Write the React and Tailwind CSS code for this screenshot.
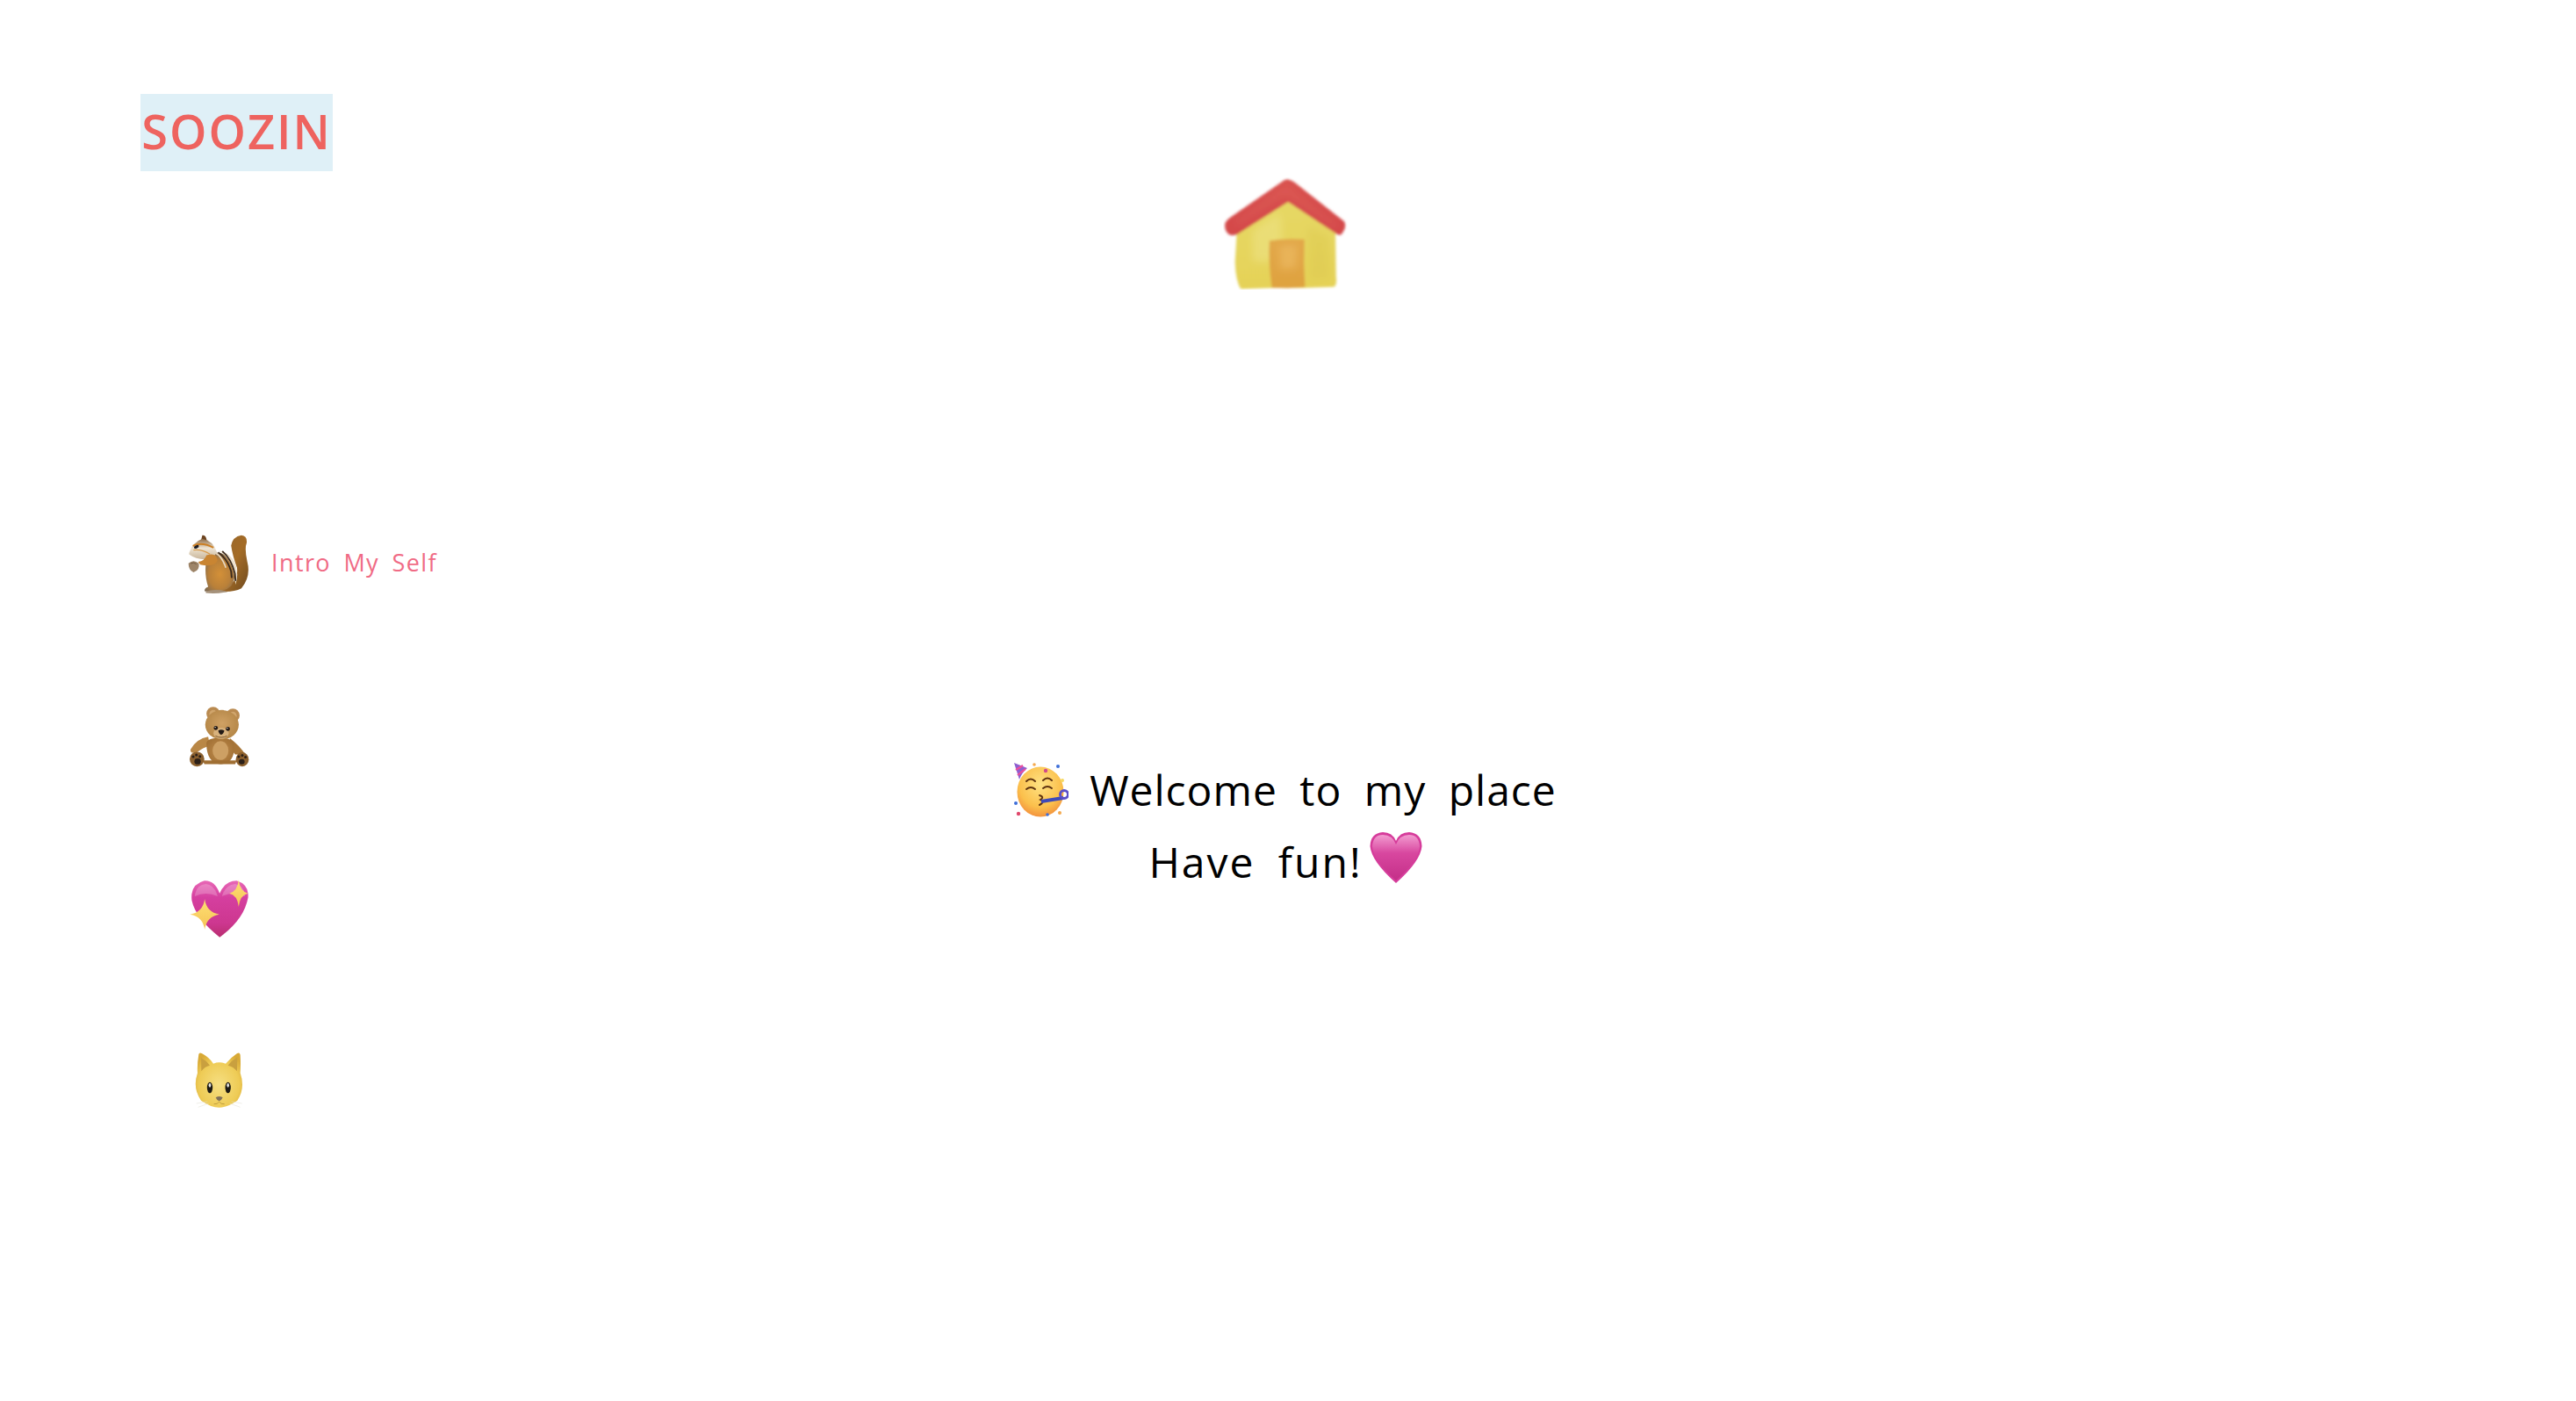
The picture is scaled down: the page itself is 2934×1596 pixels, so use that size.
const FONT = "font-['Open_Sans','Liberation_Sans',sans-serif]";

function House() {
  return (
    <svg viewBox="70 35 425 385" className="w-[142px] h-[128px] block">
      <defs>
        <filter id="hb" x="-5%" y="-5%" width="110%" height="110%"><feGaussianBlur stdDeviation="4" /></filter>
        <filter id="hb2" x="-30%" y="-30%" width="160%" height="160%"><feGaussianBlur stdDeviation="12" /></filter>
        <linearGradient id="hw" x1="0" y1="0" x2="0" y2="1"><stop offset="0" stopColor="#e6d865" /><stop offset="1" stopColor="#e5d257" /></linearGradient>
        <linearGradient id="hd" x1="0" y1="0" x2="0" y2="1"><stop offset="0" stopColor="#e2a84a" /><stop offset="1" stopColor="#dfa23f" /></linearGradient>
        <linearGradient id="hr" x1="0" y1="0" x2="0" y2="1"><stop offset="0" stopColor="#d9524f" /><stop offset="1" stopColor="#d34749" /></linearGradient>
      </defs>
      <g filter="url(#hb)">
        <path d="M116 222 L288 112 L454 225 L456 375 Q460 402 450 410 L340 414 L240 414 L130 418 Q112 390 110 325 Z" fill="url(#hw)" />
        <path d="M170 220 Q230 175 265 160 L275 300 Q215 340 170 320 Z" fill="#efe58c" opacity=".5" filter="url(#hb2)" />
        <path d="M360 200 L430 240 L435 380 L365 390 Z" fill="#d9c44c" opacity=".35" filter="url(#hb2)" />
        <path d="M228 252 Q290 243 348 248 Q344 330 350 411 L290 415 L236 413 Q224 330 228 252 Z" fill="url(#hd)" />
        <path d="M262 270 L322 268 L320 345 L266 350 Z" fill="#eebd68" opacity=".6" filter="url(#hb2)" />
        <path d="M288 42 Q303 44 320 57 L484 186 Q495 205 474 231 Q461 235 450 224 L292 119 L130 222 Q106 240 88 230 Q71 214 77 190 Q85 177 100 168 L270 51 Q278 43 288 42 Z" fill="url(#hr)" />
        <path d="M115 195 L285 78 L458 205" fill="none" stroke="#e56f66" strokeWidth="12" opacity=".45" filter="url(#hb2)" />
      </g>
    </svg>
  );
}

function Chipmunk() {
  return (
    <svg viewBox="40 55 215 205" className="w-[72px] h-[69px] block">
      <defs>
        <linearGradient id="ct" x1="0" y1="0" x2="1" y2="1"><stop offset="0" stopColor="#94652a" /><stop offset=".5" stopColor="#a46c28" /><stop offset="1" stopColor="#6f4a1e" /></linearGradient>
        <radialGradient id="cb" cx=".5" cy=".55" r=".6"><stop offset="0" stopColor="#d39038" /><stop offset=".6" stopColor="#b98039" /><stop offset="1" stopColor="#7f6a50" /></radialGradient>
        <linearGradient id="ch" x1="0" y1="0" x2="0" y2="1"><stop offset="0" stopColor="#8d6b45" /><stop offset=".45" stopColor="#eee4d2" /><stop offset="1" stopColor="#c9b69b" /></linearGradient>
        <filter id="cs"><feGaussianBlur stdDeviation="1" /></filter>
      </defs>
      <path d="M190 95 Q195 65 225 60 Q245 62 243 85 Q235 105 245 150 Q258 200 225 240 Q195 255 150 250 L185 225 Q215 215 210 170 Q195 130 190 95 Z" fill="url(#ct)" filter="url(#cs)" />
      <path d="M108 125 Q165 105 192 150 Q215 195 190 232 Q170 252 125 253 L100 250 Q98 240 112 235 Q96 190 108 125 Z" fill="url(#cb)" />
      <path d="M148 112 Q188 135 200 190 L205 228 Q218 190 202 150 Q182 118 148 112Z" fill="#efe3d0" />
      <path d="M146 118 Q176 138 190 182 L192 205" fill="none" stroke="#3a2a1d" strokeWidth="5.5" />
      <path d="M160 114 Q190 138 203 190 L205 215" fill="none" stroke="#3a2a1d" strokeWidth="5.5" />
      <path d="M134 118 Q160 132 172 170" fill="none" stroke="#e7d9c2" strokeWidth="5" />
      <path d="M104 250 Q140 240 178 252 Q140 260 104 256 Z" fill="#a5917a" />
      <path d="M92 60 Q106 57 108 84 L87 80 Z" fill="#6d4420" />
      <path d="M47 120 Q58 85 92 72 Q128 78 142 118 Q128 140 100 142 Q70 142 47 125 Z" fill="url(#ch)" />
      <path d="M60 96 Q90 80 130 102" fill="none" stroke="#cc7f24" strokeWidth="6" />
      <path d="M62 110 Q90 106 118 124" fill="none" stroke="#d89a4a" strokeWidth="4" />
      <ellipse cx="72" cy="99" rx="9" ry="5" fill="#1b1b22" transform="rotate(-25 72 99)" />
      <path d="M106 128 Q140 116 144 145 Q135 170 85 160 L78 150 Q100 148 106 128 Z" fill="#c98532" />
      <path d="M45 155 Q62 140 80 155 Q85 178 62 186 Q45 178 45 155 Z" fill="#9d8468" />
      <path d="M52 156 Q62 150 72 158" fill="none" stroke="#6d563e" strokeWidth="2.5" />
    </svg>
  );
}

function Bear() {
  return (
    <svg viewBox="42 40 206 208" className="w-[69px] h-[70px] block">
      <defs>
        <radialGradient id="bf" cx=".5" cy=".45" r=".65"><stop offset="0" stopColor="#cfa164" /><stop offset="1" stopColor="#b08242" /></radialGradient>
        <radialGradient id="bb" cx=".5" cy=".5" r=".6"><stop offset="0" stopColor="#c08d4f" /><stop offset="1" stopColor="#a06f33" /></radialGradient>
      </defs>
      <path d="M108 145 Q68 152 48 188 Q46 204 70 198 Q92 180 114 176 Z" fill="#b98746" />
      <path d="M182 150 Q215 175 234 205 L200 205 L178 180 Z" fill="#a87638" />
      <circle cx="125" cy="66" r="23" fill="#b98a50" /><circle cx="125" cy="67" r="13" fill="#d0a56c" />
      <circle cx="192" cy="72" r="23" fill="#b98a50" /><circle cx="192" cy="73" r="13" fill="#d0a56c" />
      <path d="M102 170 Q100 150 150 148 Q198 150 196 180 Q198 235 150 238 Q104 236 102 170 Z" fill="url(#bb)" />
      <ellipse cx="150" cy="192" rx="27" ry="32" fill="#cda064" />
      <ellipse cx="155" cy="104" rx="57" ry="50" fill="url(#bf)" />
      <ellipse cx="152" cy="133" rx="26" ry="19" fill="#d8b27d" />
      <circle cx="134" cy="115" r="7" fill="#241a14" /><circle cx="175" cy="118" r="7" fill="#241a14" />
      <circle cx="132" cy="113" r="2" fill="#fff" /><circle cx="173" cy="116" r="2" fill="#fff" />
      <path d="M142 124 Q152 118 163 124 Q160 136 152 138 Q145 136 142 124 Z" fill="#221a16" />
      <path d="M133 142 Q152 152 172 142" fill="none" stroke="#6e4a22" strokeWidth="2.5" />
      <path d="M90 225 L205 225 L200 238 L95 238 Z" fill="#a06f33" />
      <ellipse cx="70" cy="221" rx="25" ry="25" fill="#8a5f2e" />
      <ellipse cx="224" cy="222" rx="22" ry="24" fill="#8a5f2e" />
      <ellipse cx="72" cy="229" rx="11" ry="10" fill="#2c2018" /><ellipse cx="222" cy="230" rx="10" ry="9" fill="#2c2018" />
      <circle cx="57" cy="213" r="4.5" fill="#2c2018" /><circle cx="68" cy="207" r="4.5" fill="#2c2018" /><circle cx="80" cy="212" r="4.5" fill="#2c2018" />
      <circle cx="212" cy="213" r="4.5" fill="#2c2018" /><circle cx="224" cy="208" r="4.5" fill="#2c2018" /><circle cx="235" cy="214" r="4.5" fill="#2c2018" />
    </svg>
  );
}

function Sparkle({ cx, cy, rx, ry, id }) {
  const k = 0.13;
  return (
    <path
      d={`M${cx} ${cy - ry} Q${cx + rx * k} ${cy - ry * k} ${cx + rx} ${cy} Q${cx + rx * k} ${cy + ry * k} ${cx} ${cy + ry} Q${cx - rx * k} ${cy + ry * k} ${cx - rx} ${cy} Q${cx - rx * k} ${cy - ry * k} ${cx} ${cy - ry} Z`}
      fill={`url(#${id})`}
    />
  );
}

function SparkleHeart() {
  return (
    <svg viewBox="42 630 206 204" className="w-[69px] h-[68px] block">
      <defs>
        <linearGradient id="sh" x1="0" y1="0" x2="0" y2="1"><stop offset="0" stopColor="#e868b6" /><stop offset=".3" stopColor="#d53f9f" /><stop offset=".75" stopColor="#cd3790" /><stop offset="1" stopColor="#b92e70" /></linearGradient>
        <linearGradient id="ss" x1="0" y1="0" x2="0" y2="1"><stop offset="0" stopColor="#fde073" /><stop offset="1" stopColor="#f6c356" /></linearGradient>
      </defs>
      <path d="M147 830 Q65 765 52 705 Q45 650 95 637 Q130 635 147 680 Q165 638 205 637 Q248 650 244 695 Q230 770 147 830 Z" fill="url(#sh)" />
      <path d="M62 690 Q66 650 100 648 Q130 652 140 690 Q100 672 62 690 Z M155 690 Q165 652 200 648 Q232 655 234 690 Q195 672 155 690 Z" fill="#fff" opacity=".22" />
      <Sparkle cx={96} cy={752} rx={50} ry={52} id="ss" />
      <Sparkle cx={212} cy={680} rx={32} ry={46} id="ss" />
    </svg>
  );
}

function Cat() {
  return (
    <svg viewBox="65 55 165 195" className="w-[55px] h-[65px] block">
      <defs>
        <radialGradient id="cf" cx=".5" cy=".58" r=".62"><stop offset="0" stopColor="#f6df82" /><stop offset=".7" stopColor="#eecb55" /><stop offset="1" stopColor="#d8a936" /></radialGradient>
      </defs>
      <path d="M78 64 Q80 56 90 62 Q115 76 128 96 Q148 88 170 96 Q190 74 208 62 Q218 56 220 66 Q222 100 220 128 Q238 180 210 222 Q175 246 148 246 Q120 246 86 222 Q56 180 74 128 Q72 100 78 64 Z" fill="url(#cf)" />
      <path d="M86 76 Q105 86 116 102 Q98 106 87 122 Z M210 74 Q190 86 178 102 Q196 106 209 122 Z" fill="#c9a03f" />
      <ellipse cx="116" cy="178" rx="9.5" ry="19" fill="#1d1a14" /><ellipse cx="178" cy="178" rx="9.5" ry="19" fill="#1d1a14" />
      <ellipse cx="116" cy="170" rx="4" ry="7" fill="#e6e6e6" /><ellipse cx="178" cy="170" rx="4" ry="7" fill="#e6e6e6" />
      <path d="M136 212 Q148 204 160 212 Q156 222 148 224 Q140 222 136 212 Z" fill="#80705a" />
      <path d="M130 234 Q142 236 148 226 Q154 236 166 234" fill="none" stroke="#a98532" strokeWidth="2" />
      <path d="M70 232 L108 226 M76 245 L112 232 M226 232 L190 226 M220 245 L184 232" stroke="#e3e0d4" strokeWidth="1.6" />
    </svg>
  );
}

function Party() {
  return (
    <svg viewBox="0 0 62 62" className="w-[62px] h-[62px] block">
      <defs>
        <radialGradient id="pf" cx=".5" cy=".35" r=".7"><stop offset="0" stopColor="#fee283" /><stop offset=".65" stopColor="#fbc04c" /><stop offset="1" stopColor="#f1883a" /></radialGradient>
      </defs>
      <ellipse cx="30" cy="33" rx="26.5" ry="28.5" fill="url(#pf)" />
      <path d="M0 0 L15 6 Q9 11 6 19 Z" fill="#8e5fd0" />
      <path d="M2 8 L10 3 M4 14 L13 7" stroke="#ec4f9c" strokeWidth="2.2" />
      <path d="M14 21 Q19 16 24 21 M33 20 Q38 15 43 20" fill="none" stroke="#5e3310" strokeWidth="2" strokeLinecap="round" />
      <path d="M14 30 Q19 26 24 30 M33 29 Q38 25 43 29" fill="none" stroke="#5e3310" strokeWidth="2" strokeLinecap="round" />
      <path d="M29 37 Q35 39 30 42 Q35 45 29 48" fill="none" stroke="#5e3310" strokeWidth="2" strokeLinecap="round" />
      <path d="M31 44 L56 40" stroke="#3f4ab8" strokeWidth="4" />
      <circle cx="57" cy="36" r="4.5" fill="none" stroke="#5b50c8" strokeWidth="3" />
      <circle cx="50" cy="4" r="2" fill="#3f6fd8" /><circle cx="36" cy="9" r="2.2" fill="#d14b8c" />
      <circle cx="23" cy="2" r="1.8" fill="#f4a94e" /><circle cx="2" cy="46" r="2" fill="#3f6fd8" />
      <circle cx="5" cy="58" r="2.2" fill="#e0486c" /><circle cx="52" cy="57" r="2" fill="#f4a94e" />
      <circle cx="38" cy="59" r="1.8" fill="#3f6fd8" /><circle cx="55" cy="20" r="2" fill="#f6d860" />
    </svg>
  );
}

function PinkHeart() {
  return (
    <svg viewBox="0 0 60 60" className="w-[60px] h-[60px] block">
      <defs>
        <linearGradient id="ph" x1="0" y1="0" x2="0" y2="1"><stop offset="0" stopColor="#f29bd0" /><stop offset=".4" stopColor="#d8479f" /><stop offset="1" stopColor="#c42f88" /></linearGradient>
      </defs>
      <path d="M30 59 Q2 34 0.5 17 Q1 2 15 1 Q26 1 30 11 Q34 1 45 1 Q59 2 59.5 17 Q58 34 30 59 Z" fill="#d63c9b" />
      <path d="M30 56 Q4 33 3 17 Q4 4 15 4 Q26 4 30 15 Q34 4 45 4 Q56 4 57 17 Q56 33 30 56 Z" fill="url(#ph)" />
    </svg>
  );
}

const items = [
  { icon: <Chipmunk />, label: "Intro My Self" },
  { icon: <Bear /> },
  { icon: <SparkleHeart /> },
  { icon: <Cat /> },
];

export default function App() {
  return (
    <div className={`min-h-screen bg-white ${FONT}`}>
      <header className="pt-[107px] pl-[160px]">
        <div className="w-[219px] h-[88px] bg-[#dff0f7] flex items-center justify-center text-[#ee635f] text-[54px] font-semibold leading-none tracking-[2px] pb-1">
          SOOZIN
        </div>
      </header>
      <div className="grid grid-cols-[1fr_auto_1fr]">
        <nav className="pt-[413px] pl-[213px] flex flex-col gap-[127px]">
          {items.map((it, i) => (
            <div key={i} className="flex items-center h-[69px]">
              <div className="w-[72px] flex justify-center shrink-0">{it.icon}</div>
              {it.label && (
                <span className="ml-6 -mt-1 text-[#f06b85] text-[27px] font-medium tracking-[1.4px] [word-spacing:6px] leading-none whitespace-nowrap">
                  {it.label}
                </span>
              )}
            </div>
          ))}
        </nav>
        <main className="flex flex-col items-center pt-[7px] -translate-x-[3px]">
          <House />
          <div className="mt-[529px] text-black text-[48px] font-medium leading-[82px] text-center whitespace-nowrap">
            <div className="flex items-center justify-center h-[82px] tracking-[1px] [word-spacing:12px]">
              <Party />
              <span className="ml-6">Welcome to my place</span>
            </div>
            <div className="flex items-center justify-center h-[82px] tracking-[2px] [word-spacing:12px]">
              <span>Have fun!</span>
              <span className="ml-[8px] -translate-y-[5px]"><PinkHeart /></span>
            </div>
          </div>
        </main>
        <div />
      </div>
    </div>
  );
}
